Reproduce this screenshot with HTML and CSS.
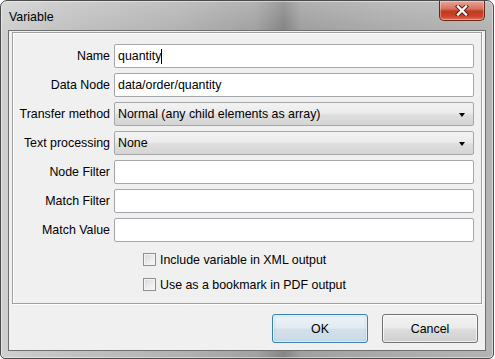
FILE: index.html
```html
<!DOCTYPE html>
<html lang="en">
<head>
  <meta charset="UTF-8">
  <meta name="viewport" content="width=device-width, initial-scale=1.0">
  <title>Variable</title>
  <link rel="stylesheet" href="styles.css">
</head>
<body>
  <div class="window">
    <header class="title-bar">
      <span class="title">Variable</span>
      <button class="button-close" aria-label="Close">
        <svg width="14" height="11" viewBox="0 0 14 11">
          <path d="M3 1.5 L11 9.5 M11 1.5 L3 9.5" stroke="#5a1a10" stroke-width="4.2" stroke-linecap="square"/>
          <path d="M3 1.5 L11 9.5 M11 1.5 L3 9.5" stroke="#ffffff" stroke-width="2.4" stroke-linecap="square"/>
        </svg>
      </button>
    </header>
    <main class="dialog-content">
      <section class="form-panel">
        <div class="form-grid">
          <label class="form-label">Name</label>
          <div class="field">quantity<span class="caret"></span></div>

          <label class="form-label">Data Node</label>
          <div class="field">data/order/quantity</div>

          <label class="form-label">Transfer method</label>
          <div class="field field-select">Normal (any child elements as array)<span class="arrow"></span></div>

          <label class="form-label">Text processing</label>
          <div class="field field-select">None<span class="arrow"></span></div>

          <label class="form-label">Node Filter</label>
          <div class="field"></div>

          <label class="form-label">Match Filter</label>
          <div class="field"></div>

          <label class="form-label">Match Value</label>
          <div class="field"></div>
        </div>
        <div class="check-list">
          <div class="check-row"><span class="checkbox"></span>Include variable in XML output</div>
          <div class="check-row"><span class="checkbox"></span>Use as a bookmark in PDF output</div>
        </div>
      </section>
      <footer class="button-bar">
        <button class="button button-ok">OK</button>
        <button class="button">Cancel</button>
      </footer>
    </main>
  </div>
</body>
</html>
```

FILE: styles.css
```css
:root {
  --color-face: #f0f0f0;
  --color-text: #000000;
  --color-field-border: #a5a7ad;
  --color-frame-edge: #4b4b4b;
}
* {
  margin: 0;
  padding: 0;
  box-sizing: border-box;
}
body {
  background-color: #ffffff;
  font-family: "Liberation Sans", Arial, sans-serif;
  font-size: 12.4px;
  color: var(--color-text);
}
.window {
  width: 494px;
  height: 359px;
  display: flex;
  flex-direction: column;
  padding: 0 7px 7px;
  border: 1px solid var(--color-frame-edge);
  border-radius: 7px 7px 5px 5px;
  background:
    linear-gradient(rgba(255, 255, 255, 0.18), rgba(255, 255, 255, 0) 28px),
    linear-gradient(90deg, #cfd0d0 0, #c3c3c3 60px, #b2b2b2 180px, #a2a2a2 255px, #858585 283px, #a0a0a0 300px, #ababab 380px, #b4b4b4 494px);
  box-shadow: inset 0 0 0 1px rgba(255, 255, 255, 0.45);
}
.title-bar {
  height: 29px;
  display: flex;
  justify-content: space-between;
  align-items: flex-start;
}
.title {
  padding: 9px 0 0 1px;
  font-size: 12.4px;
}
.button-close {
  width: 46px;
  height: 20px;
  margin-right: 1px;
  display: flex;
  justify-content: center;
  align-items: center;
  border: 1px solid #6b2417;
  border-top: none;
  border-radius: 0 0 5px 5px;
  background: linear-gradient(#e6a699 0%, #d8735f 40%, #c2391f 55%, #c9442a 80%, #dd7359 100%);
  box-shadow: inset 0 0 0 1px rgba(255, 255, 255, 0.35);
}
.dialog-content {
  flex: 1;
  display: flex;
  flex-direction: column;
  padding: 1px 3px 0;
  background-color: var(--color-face);
  border: 1px solid #6f6f6f;
}
.form-panel {
  height: 272px;
  padding: 11px 0 0;
  border: 1px solid #a0a0a0;
  box-shadow: inset 1px 1px 0 #ffffff, 1px 1px 0 #ffffff;
}
.form-grid {
  display: grid;
  grid-template-columns: 97px 360px;
  grid-auto-rows: 24px;
  column-gap: 4px;
  row-gap: 5px;
}
.form-label {
  display: flex;
  justify-content: flex-end;
  align-items: center;
  white-space: nowrap;
}
.field {
  position: relative;
  display: flex;
  align-items: center;
  padding-left: 3px;
  background-color: #ffffff;
  border: 1px solid var(--color-field-border);
  border-radius: 2px;
  white-space: nowrap;
}
.caret {
  width: 1px;
  height: 15px;
  margin-left: 0;
  background-color: #000000;
}
.field-select {
  background: linear-gradient(#f3f3f3 0%, #ebebeb 45%, #dedede 55%, #d5d5d5 100%);
  border-color: #a7a7a7;
}
.arrow {
  position: absolute;
  right: 8px;
  top: 10px;
  border-left: 3.5px solid transparent;
  border-right: 3.5px solid transparent;
  border-top: 4px solid #000000;
}
.check-list {
  display: flex;
  flex-direction: column;
  gap: 12px;
  margin: 11px 0 0 130px;
}
.check-row {
  height: 13px;
  display: flex;
  align-items: center;
  gap: 4px;
  white-space: nowrap;
}
.checkbox {
  width: 13px;
  height: 13px;
  border: 1px solid #8e8f8f;
  background: linear-gradient(135deg, #d6d6d6 0%, #eeeeee 60%, #fbfbfb 100%);
  box-shadow: inset 0 0 0 1px #f4f4f4;
}
.button-bar {
  display: flex;
  justify-content: flex-end;
  gap: 14px;
  padding: 10px 4px 0 0;
}
.button {
  width: 96px;
  height: 29px;
  font-family: "Liberation Sans", Arial, sans-serif;
  font-size: 12.4px;
  color: var(--color-text);
  border: 1px solid #707070;
  border-radius: 3px;
  background: linear-gradient(#f2f2f2 0%, #ebebeb 48%, #dddddd 52%, #cfcfcf 100%);
  box-shadow: inset 0 0 0 1px rgba(255, 255, 255, 0.7);
}
.button-ok {
  border-color: #3c7fb1;
  background: linear-gradient(#edf3f8 0%, #e2ebf2 48%, #d3e0ea 52%, #c9dae7 100%);
  box-shadow: inset 0 0 0 1px rgba(255, 255, 255, 0.6), inset 0 0 2px 1px rgba(120, 190, 230, 0.5);
}
```
